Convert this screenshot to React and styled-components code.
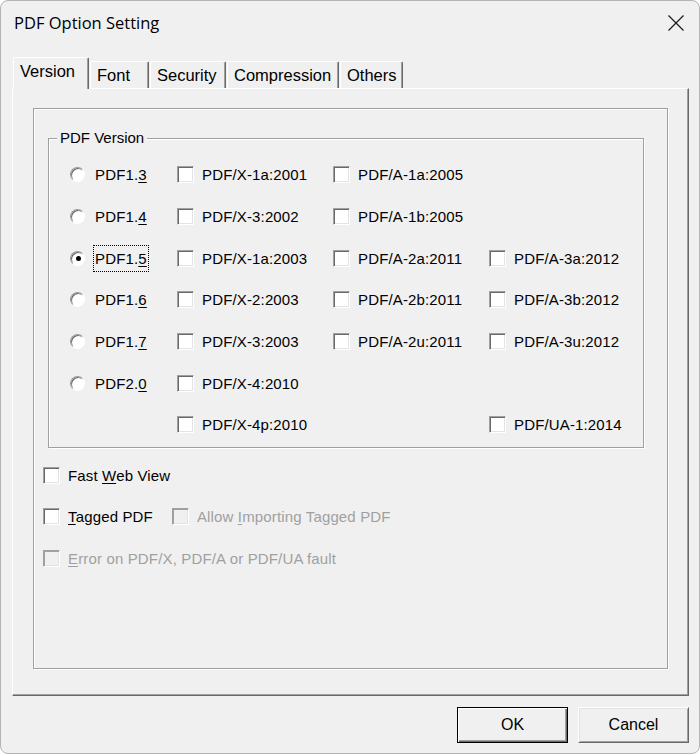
import React from 'react';
import styled, { createGlobalStyle } from 'styled-components';

const Global = createGlobalStyle`
  html, body {
    margin: 0;
    padding: 0;
    background: #fff;
  }
  * {
    box-sizing: border-box;
  }
`;

const Window = styled.div`
  width: 700px;
  height: 754px;
  display: flex;
  flex-direction: column;
  background: #f0f0f0;
  border: 1px solid #b4b4b4;
  border-radius: 8px;
  padding: 0 10px 0 11px;
  font-family: "Liberation Sans", Arial, sans-serif;
  color: #000;
  overflow: hidden;
`;

const TitleBar = styled.div`
  height: 56px;
  flex: none;
  display: flex;
  align-items: flex-start;
  justify-content: space-between;
  margin: 0 -10px 0 -11px;
`;

const Title = styled.div`
  height: 44px;
  line-height: 44px;
  padding-left: 13px;
  font-family: "Open Sans", "Noto Sans", sans-serif;
  font-size: 16.5px;
  color: #000;
`;

const Close = styled.div`
  width: 46px;
  height: 44px;
  display: flex;
  align-items: center;
  justify-content: center;
`;

const TabRow = styled.div`
  height: 31px;
  flex: none;
  display: flex;
  align-items: flex-end;
  gap: 1px;
  padding-left: 1px;
  position: relative;
  z-index: 1;
`;

const Tab = styled.div`
  width: ${p => p.$w}px;
  height: ${p => (p.$active ? 32 : 27)}px;
  margin-bottom: ${p => (p.$active ? -1 : 0)}px;
  padding: 3px 0 0 6px;
  background: #f0f0f0;
  border: 1px solid;
  border-color: #fff #696969 transparent #fff;
  border-bottom: none;
  border-radius: 2px 2px 0 0;
  box-shadow: inset -1px 0 0 #a0a0a0;
  font-size: 16.5px;
  line-height: 20px;
  white-space: nowrap;
`;

const Panel = styled.div`
  height: 608px;
  flex: none;
  display: flex;
  flex-direction: column;
  border: 1px solid;
  border-color: #fff #696969 #696969 #fff;
  box-shadow: inset -1px -1px 0 #a0a0a0;
  padding: 19px 20px 26px 20px;
`;

const Frame = styled.div`
  flex: 1;
  border: 1px solid #a0a0a0;
  box-shadow: inset 1px 1px 0 #fff, 1px 1px 0 #fff;
  padding: 29px 23px 0 9px;
  display: flex;
  flex-direction: column;
`;

const Group = styled.div`
  position: relative;
  margin-left: 5px;
  border: 1px solid #a0a0a0;
  box-shadow: inset 1px 1px 0 #fff, 1px 1px 0 #fff;
  padding: 15px 0 1px 21px;
  display: grid;
  grid-template-columns: 107px 156px 156px 1fr;
  grid-auto-rows: 41.67px;
`;

const Legend = styled.span`
  position: absolute;
  top: -10px;
  left: 8px;
  padding: 0 3px;
  background: #f0f0f0;
  font-size: 15px;
  line-height: 18px;
`;

const Cell = styled.div`
  display: flex;
  align-items: center;
  gap: ${p => (p.$radio ? 8 : 6)}px;
`;

const Radio = styled.span`
  width: 15px;
  height: 15px;
  flex: none;
  border-radius: 50%;
  background: #fff;
  border: 1px solid;
  border-color: #9a9a9a #fff #fff #9a9a9a;
  box-shadow: inset 1px 1px 0 #6a6a6a;
  display: flex;
  align-items: center;
  justify-content: center;
`;

const Dot = styled.span`
  width: 5px;
  height: 5px;
  border-radius: 50%;
  background: #000;
  margin: 1px 0 0 1px;
`;

const Box = styled.span`
  width: 17px;
  height: 17px;
  flex: none;
  border: 1px solid;
  border-color: #a0a0a0 #fff #fff #a0a0a0;
  box-shadow: inset 1px 1px 0 ${p => (p.$disabled ? '#a0a0a0' : '#696969')}, inset -1px -1px 0 #e3e3e3;
  background: ${p => (p.$disabled ? '#f0f0f0' : '#fff')};
`;

const Label = styled.span`
  font-size: 15px;
  line-height: 19px;
  padding: 3px 1px;
  border: 1px dotted ${p => (p.$focus ? '#000' : 'transparent')};
  color: ${p => (p.$disabled ? '#a0a0a0' : '#000')};
  white-space: nowrap;
  letter-spacing: 0.15px;

  u {
    text-decoration: underline;
    text-underline-offset: 2px;
  }
`;

const Options = styled.div`
  margin-top: 7px;
  display: flex;
  flex-direction: column;
`;

const OptionRow = styled.div`
  height: 41.5px;
  display: flex;
  align-items: center;
  gap: 17px;
`;

const Footer = styled.div`
  flex: none;
  display: flex;
  justify-content: flex-end;
  gap: 10px;
  padding-top: 11px;
`;

const Button = styled.button`
  width: 111px;
  height: 36px;
  padding: 0;
  background: #f0f0f0;
  font-family: "Liberation Sans", Arial, sans-serif;
  font-size: 16px;
  color: #000;
  border: 1px solid;
  border-color: ${p => (p.$default ? '#000' : '#fff #696969 #696969 #fff')};
  box-shadow: ${p =>
    p.$default
      ? 'inset 1px 1px 0 #fff, inset -1px -1px 0 #696969, inset -2px -2px 0 #a0a0a0'
      : 'inset 1px 1px 0 #e3e3e3, inset -1px -1px 0 #a0a0a0'};
`;

const CheckItem = ({ label, disabled, children }) => (
  <Cell>
    <Box $disabled={disabled} />
    <Label $disabled={disabled}>{children || label}</Label>
  </Cell>
);

const rows = [
  { r: ['PDF1.', '3'], x: 'PDF/X-1a:2001', a: 'PDF/A-1a:2005' },
  { r: ['PDF1.', '4'], x: 'PDF/X-3:2002', a: 'PDF/A-1b:2005' },
  { r: ['PDF1.', '5'], on: true, x: 'PDF/X-1a:2003', a: 'PDF/A-2a:2011', a3: 'PDF/A-3a:2012' },
  { r: ['PDF1.', '6'], x: 'PDF/X-2:2003', a: 'PDF/A-2b:2011', a3: 'PDF/A-3b:2012' },
  { r: ['PDF1.', '7'], x: 'PDF/X-3:2003', a: 'PDF/A-2u:2011', a3: 'PDF/A-3u:2012' },
  { r: ['PDF2.', '0'], x: 'PDF/X-4:2010' },
  { x: 'PDF/X-4p:2010', a3: 'PDF/UA-1:2014' },
];

const tabs = [
  { name: 'Version', w: 76, active: true },
  { name: 'Font', w: 59 },
  { name: 'Security', w: 76 },
  { name: 'Compression', w: 112 },
  { name: 'Others', w: 63 },
];

const App = () => {
  return (
    <Window>
      <Global />
      <TitleBar>
        <Title>PDF Option Setting</Title>
        <Close>
          <svg width="18" height="18" viewBox="0 0 18 18">
            <path d="M1.5 1.5 L16.5 16.5 M16.5 1.5 L1.5 16.5" stroke="#1a1a1a" strokeWidth="1.2" />
          </svg>
        </Close>
      </TitleBar>

      <TabRow>
        {tabs.map(t => (
          <Tab key={t.name} $w={t.w} $active={t.active}>{t.name}</Tab>
        ))}
      </TabRow>

      <Panel>
        <Frame>
          <Group>
            <Legend>PDF Version</Legend>
            {rows.map((row, i) => (
              <React.Fragment key={i}>
                {row.r ? (
                  <Cell $radio>
                    <Radio>{row.on && <Dot />}</Radio>
                    <Label $focus={row.on}>
                      {row.r[0]}<u>{row.r[1]}</u>
                    </Label>
                  </Cell>
                ) : <Cell />}
                {row.x ? <CheckItem label={row.x} /> : <Cell />}
                {row.a ? <CheckItem label={row.a} /> : <Cell />}
                {row.a3 ? <CheckItem label={row.a3} /> : <Cell />}
              </React.Fragment>
            ))}
          </Group>

          <Options>
            <OptionRow>
              <CheckItem>Fast <u>W</u>eb View</CheckItem>
            </OptionRow>
            <OptionRow>
              <CheckItem><u>T</u>agged PDF</CheckItem>
              <CheckItem disabled>Allow <u>I</u>mporting Tagged PDF</CheckItem>
            </OptionRow>
            <OptionRow>
              <CheckItem disabled><u>E</u>rror on PDF/X, PDF/A or PDF/UA fault</CheckItem>
            </OptionRow>
          </Options>
        </Frame>
      </Panel>

      <Footer>
        <Button $default>OK</Button>
        <Button>Cancel</Button>
      </Footer>
    </Window>
  );
};

export default App;
